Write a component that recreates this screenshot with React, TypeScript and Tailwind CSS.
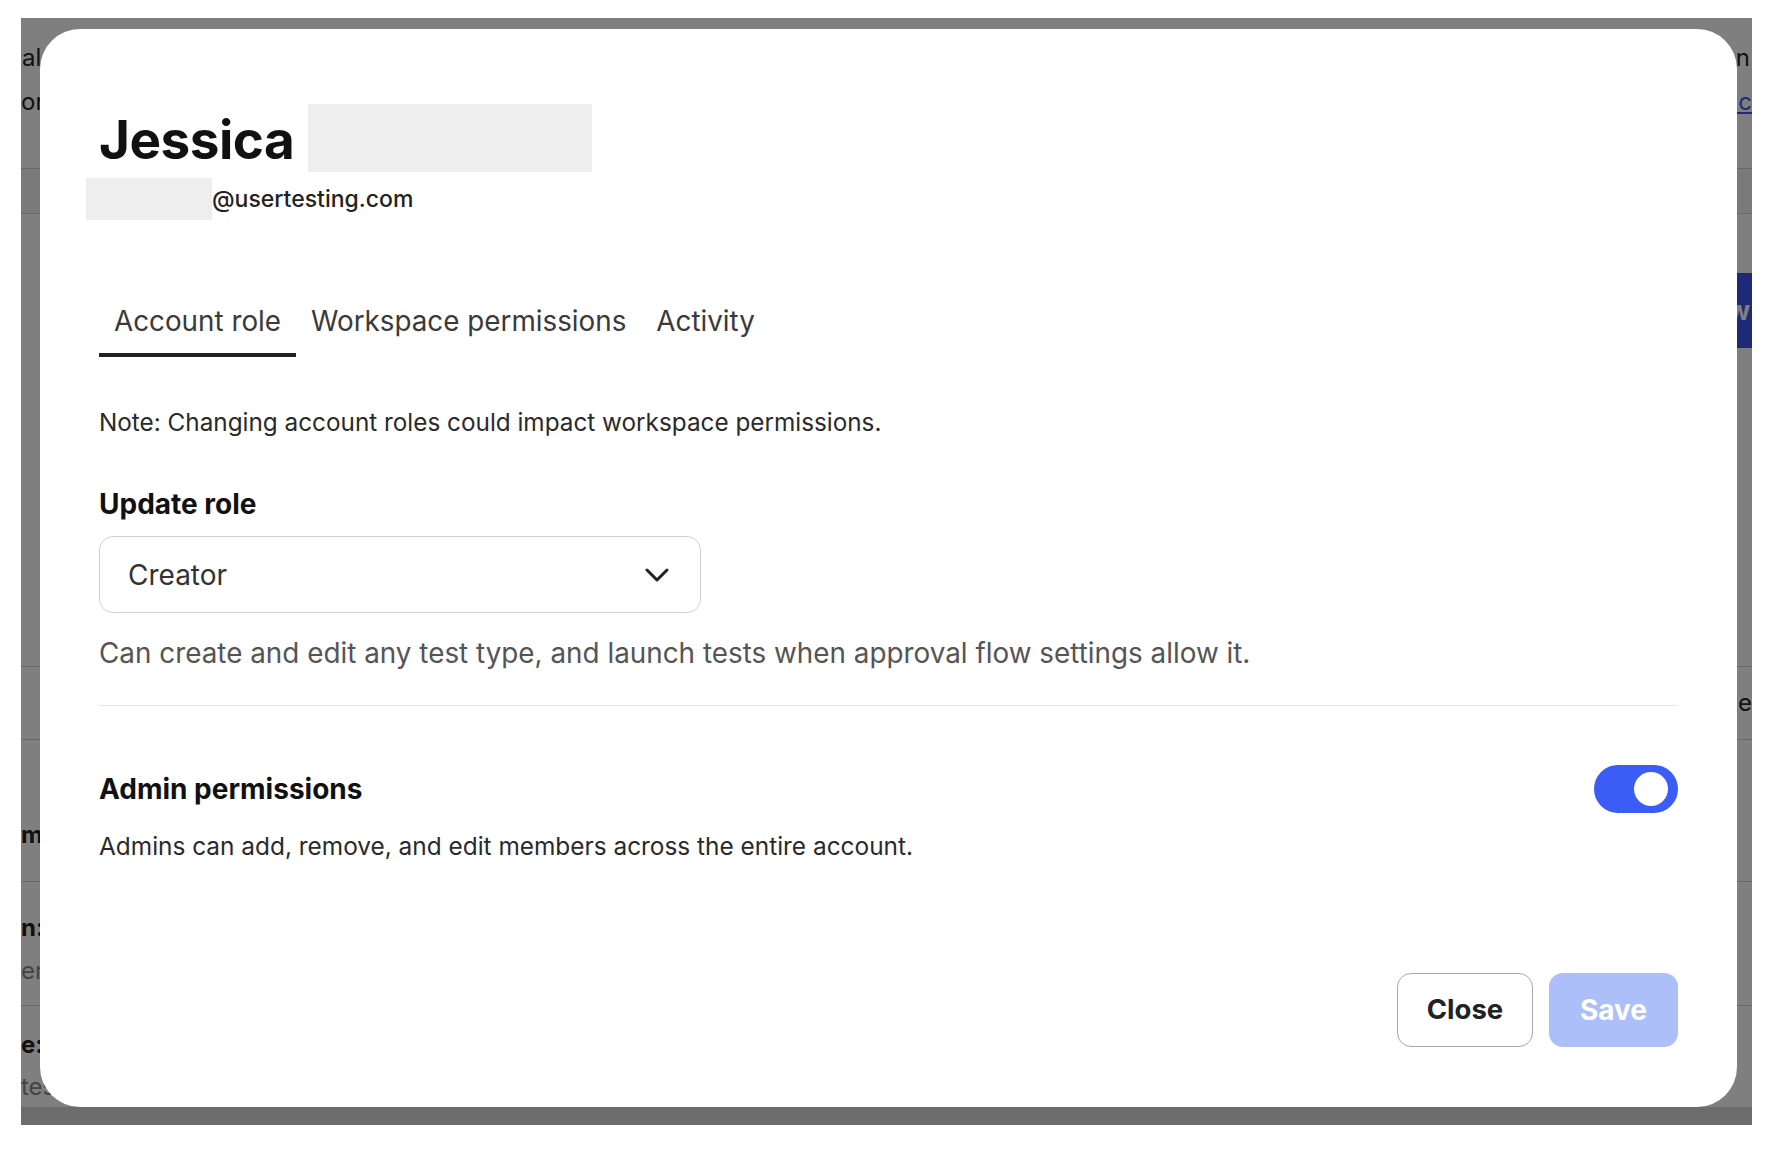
import { JSX } from 'react';

// Page that sits behind the dimmed backdrop; only its edges show past the modal.
const BackgroundPage = (): JSX.Element => {
  return (
    <div className="flex h-full flex-col bg-white text-[24px] text-[#222]">
      <div className="flex h-[58px] items-end justify-between pl-[1px]">
        <span>al</span>
        <span className="pr-[2px]">n</span>
      </div>
      <div className="flex h-[44px] items-end justify-between">
        <span>or</span>
        <span className="text-[#3c54f0] underline">ac</span>
      </div>
      <div className="h-[48px]" />
      <div className="h-[46px] border-y border-[#d0d0d0] bg-[#f4f4f4]" />
      <div className="h-[59px]" />
      <div className="flex h-[75px] justify-end">
        <div className="flex w-[60px] items-center justify-end bg-[#3c54f0] pr-[2px] text-[26px] font-bold text-white">
          w
        </div>
      </div>
      <div className="h-[319px] border-b border-[#d0d0d0]" />
      <div className="flex h-[73px] items-center justify-end border-b border-[#d0d0d0]">
        <span>e</span>
      </div>
      <div className="flex h-[142px] items-end border-b border-[#d0d0d0] pb-[30px]">
        <span className="font-bold leading-[32px]">m</span>
      </div>
      <div className="flex h-[124px] flex-col border-b border-[#d0d0d0] pt-[24px] leading-[43px]">
        <span className="font-bold">n:</span>
        <span className="text-[#888]">er</span>
      </div>
      <div className="flex h-[101px] flex-col pt-[18px] leading-[42px]">
        <span className="font-bold">e:</span>
        <span className="text-[#888]">tes</span>
      </div>
      <div className="flex-1 bg-[#d8d8d8]" />
    </div>
  );
};

const Tab = ({ label, active }: { label: string; active?: boolean }): JSX.Element => {
  return (
    <div
      className={
        active
          ? 'border-b-[4px] border-[#222] px-[15px] pb-[16px] text-[27.8px] leading-[32px] text-[#3a3a3a]'
          : 'border-b-[4px] border-transparent px-[15px] pb-[16px] text-[27.8px] leading-[32px] text-[#3a3a3a]'
      }
    >
      {label}
    </div>
  );
};

const Toggle = (): JSX.Element => {
  return (
    <div className="flex h-[48px] w-[84px] items-center justify-end rounded-full bg-[#3b5cf6] pr-[10px]">
      <div className="h-[34px] w-[34px] rounded-full bg-white" />
    </div>
  );
};

const MemberModal = (): JSX.Element => {
  return (
    <div className="flex h-full flex-col px-[59px] pt-[75px] font-['Inter',sans-serif]">
      <div className="flex items-start">
        <h1 className="mt-[2px] text-[53px] font-bold leading-[68px] tracking-[-0.5px] text-[#111]">Jessica</h1>
        <div className="ml-[14px] h-[68px] w-[284px] bg-[#eeeeee]" />
      </div>

      <div className="mt-[4px] flex items-center">
        <div className="-ml-[13px] h-[42px] w-[126px] bg-[#eeeeee]" />
        <span className="text-[23px] font-medium text-[#222]">@usertesting.com</span>
      </div>

      <div className="mt-[85px] flex">
        <Tab label="Account role" active />
        <Tab label="Workspace permissions" />
        <Tab label="Activity" />
      </div>

      <p className="mt-[49px] text-[24.3px] leading-[32px] text-[#2a2a2a]">
        Note: Changing account roles could impact workspace permissions.
      </p>

      <label className="mt-[50px] text-[28px] font-bold leading-[32px] text-[#111]">Update role</label>
      <button className="mt-[16px] flex h-[77px] w-[602px] items-center justify-between rounded-[14px] border-[1.5px] border-[#d2d2d2] pl-[28px] pr-[31px] text-left">
        <span className="text-[28px] text-[#333]">Creator</span>
        <svg className="h-[16px] w-[24px]" viewBox="0 0 24 16" fill="none" stroke="#222" strokeWidth={3} strokeLinecap="round" strokeLinejoin="round">
          <path d="M2 3l10 10L22 3" />
        </svg>
      </button>
      <p className="mt-[24px] text-[27.85px] leading-[32px] text-[#555]">
        Can create and edit any test type, and launch tests when approval flow settings allow it.
      </p>

      <div className="mt-[36px] h-px bg-[#e6e6e6]" />

      <div className="mt-[59px] flex h-[48px] items-center justify-between">
        <span className="text-[28px] font-bold text-[#111]">Admin permissions</span>
        <Toggle />
      </div>
      <p className="mt-[17px] text-[24.4px] leading-[32px] text-[#2a2a2a]">
        Admins can add, remove, and edit members across the entire account.
      </p>

      <div className="mt-[111px] flex justify-end gap-[16px]">
        <button className="h-[74px] w-[136px] rounded-[14px] border-[1.5px] border-[#a8a8a8] text-[27.5px] font-bold text-[#222]">
          Close
        </button>
        <button className="h-[74px] w-[129px] rounded-[14px] bg-[#adbff8] text-[28px] font-bold text-white">
          Save
        </button>
      </div>
    </div>
  );
};

export default function App(): JSX.Element {
  return (
    <div className="h-[1152px] w-[1772px] bg-white pl-[21px] pt-[18px] font-['Inter',sans-serif]">
      <div className="relative h-[1107px] w-[1731px] overflow-hidden">
        <BackgroundPage />
        <div className="absolute inset-0 bg-black/50" />
        <div className="absolute left-[19px] top-[11px] h-[1078px] w-[1697px] rounded-[40px] bg-white">
          <MemberModal />
        </div>
      </div>
    </div>
  );
}
